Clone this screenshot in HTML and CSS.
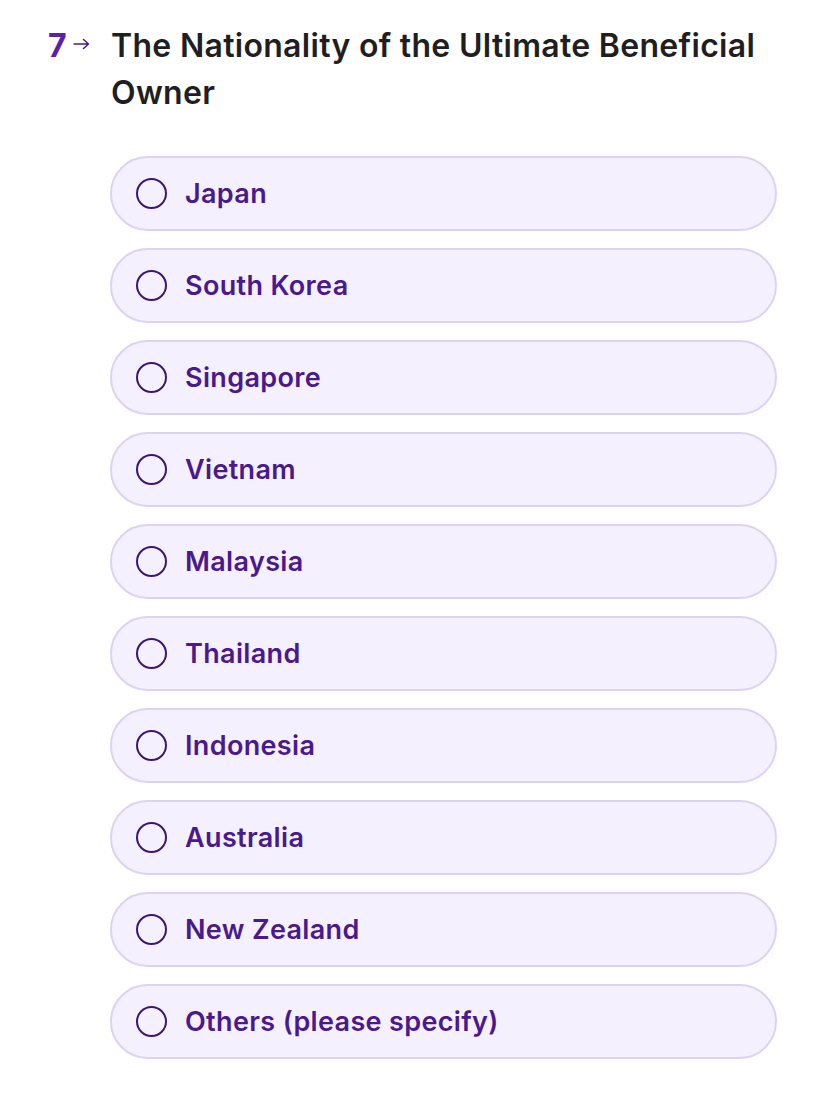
FILE: index.html
```html
<!DOCTYPE html>
<html>
<head>
<meta charset="utf-8">
<link rel="stylesheet" href="styles.css">
</head>
<body>
<div class="page">
  <div class="question">
    <div class="qnum"><span class="num">7</span><svg class="arrow" width="17" height="12" viewBox="0 0 17 12"><path d="M1 6H15.5M10.5 1.5L15.5 6L10.5 10.5" fill="none" stroke="#4a1a8c" stroke-width="1.5" stroke-linecap="round" stroke-linejoin="round"/></svg></div>
    <h1 class="title">The Nationality of the Ultimate Beneficial Owner</h1>
  </div>
  <ul class="options">
    <li class="option"><span class="radio"></span><span class="label">Japan</span></li>
    <li class="option"><span class="radio"></span><span class="label">South Korea</span></li>
    <li class="option"><span class="radio"></span><span class="label">Singapore</span></li>
    <li class="option"><span class="radio"></span><span class="label">Vietnam</span></li>
    <li class="option"><span class="radio"></span><span class="label">Malaysia</span></li>
    <li class="option"><span class="radio"></span><span class="label">Thailand</span></li>
    <li class="option"><span class="radio"></span><span class="label">Indonesia</span></li>
    <li class="option"><span class="radio"></span><span class="label">Australia</span></li>
    <li class="option"><span class="radio"></span><span class="label">New Zealand</span></li>
    <li class="option"><span class="radio"></span><span class="label">Others (please specify)</span></li>
  </ul>
</div>
</body>
</html>
```
FILE: styles.css
```css
html, body {
  margin: 0;
  padding: 0;
  background: #ffffff;
}
body {
  font-family: Inter, "Noto Sans", sans-serif;
}
.page {
  padding: 22px 51px 0 48px;
}
.question {
  display: flex;
  align-items: flex-start;
}
.qnum {
  width: 63px;
  flex: none;
  display: flex;
  align-items: center;
  height: 47px;
}
.num {
  font-size: 32px;
  font-weight: 700;
  color: #5b22a8;
  line-height: 47px;
}
.arrow {
  margin-left: 6px;
  margin-top: -4px;
}
.title {
  margin: 0;
  font-size: 32px;
  font-weight: 600;
  line-height: 47px;
  color: #1f1f22;
  letter-spacing: 0.3px;
}
.options {
  list-style: none;
  margin: 40px 0 0 62px;
  padding: 0;
  display: flex;
  flex-direction: column;
  gap: 17px;
}
.option {
  height: 71px;
  box-sizing: content-box;
  border: 2px solid #ddd2f2;
  border-radius: 40px;
  background: #f5f0fe;
  display: flex;
  align-items: center;
  padding-left: 24px;
}
.radio {
  width: 27px;
  height: 27px;
  border: 2px solid #3b1670;
  border-radius: 50%;
  flex: none;
}
.label {
  margin-left: 18px;
  font-size: 27px;
  font-weight: 600;
  color: #4a1a8c;
  letter-spacing: 0.35px;
}
```
